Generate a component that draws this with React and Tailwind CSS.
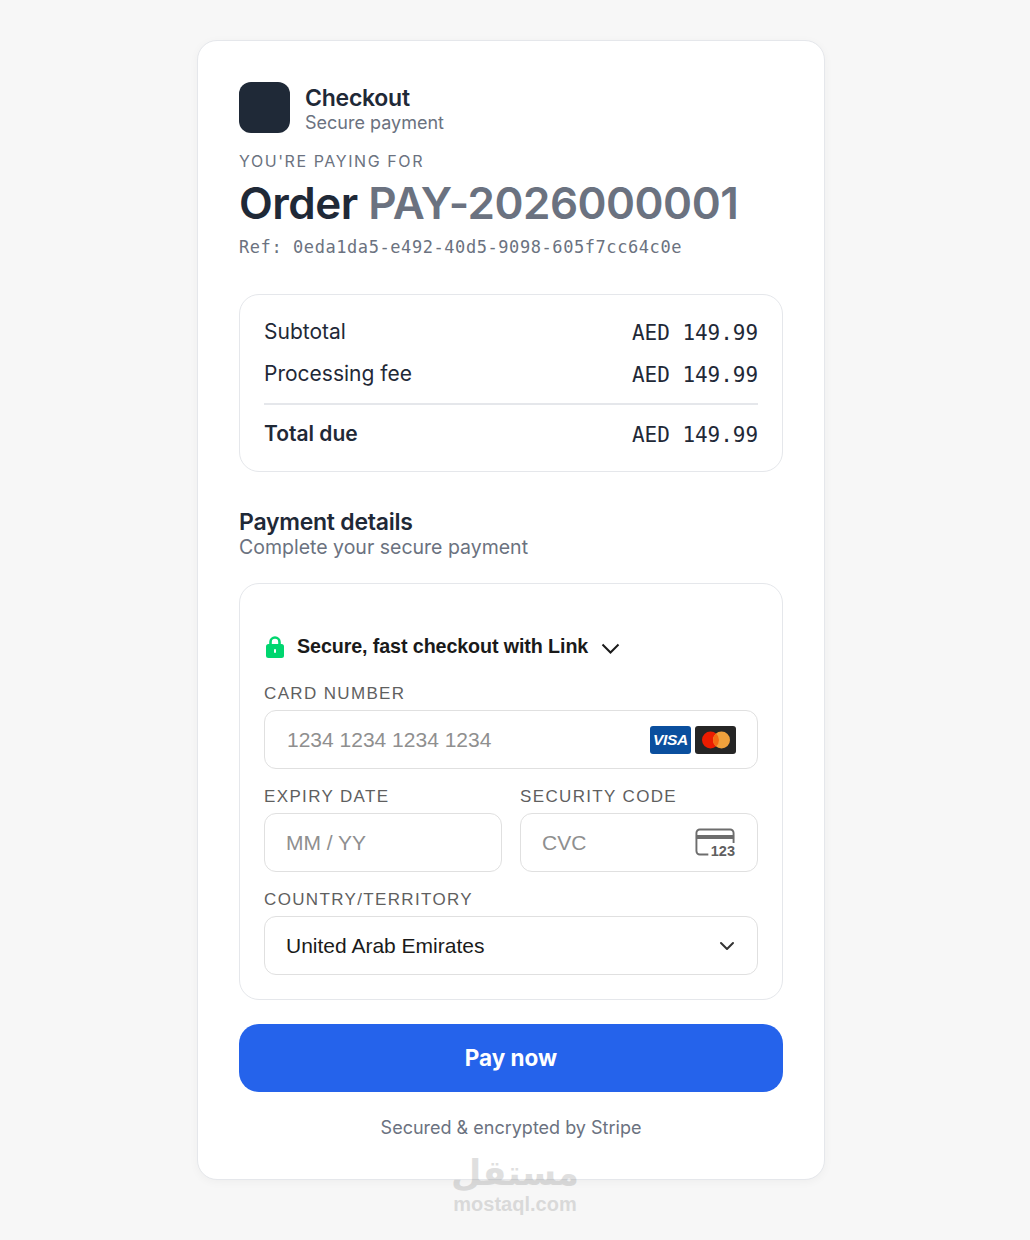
import { ChevronDown } from 'lucide-react';

const inter = "font-['Inter',sans-serif]";
const arial = "font-['Liberation_Sans',Arial,sans-serif]";
const mono = "font-['DejaVu_Sans_Mono',monospace]";

const SummaryRow = ({ label, bold, className }) => (
  <div className={`flex items-center justify-between h-[42px] ${className || ''}`}>
    <span className={`text-[21px] text-[#1f2937] ${bold ? 'font-semibold' : ''}`}>{label}</span>
    <span className={`${mono} mt-[4px] text-[21px] tracking-[-0.04px] text-[#1f2937]`}>AED 149.99</span>
  </div>
);

const FieldLabel = ({ children }) => (
  <div className="h-[17px] leading-[17px] mb-[8px] text-[17px] tracking-[1.35px] text-[#5f5f5f] uppercase whitespace-nowrap">{children}</div>
);

const Field = ({ children, className }) => (
  <div className={`h-[59px] border border-[#e0e0e0] rounded-[12px] flex items-center justify-between bg-white ${className || ''}`}>
    {children}
  </div>
);

const LockIcon = () => (
  <svg width="18" height="22" viewBox="0 0 18 22" className="ml-[2px]">
    <path d="M4.500 9V6a4.500 4.500 0 0 1 9 0v3" fill="none" stroke="#00d66f" strokeWidth="2.600" />
    <rect x="0" y="8" width="18" height="14" rx="2.500" fill="#00d66f" />
    <rect x="8" y="13" width="2" height="4" rx="1" fill="#fff" />
  </svg>
);

const LinkChevron = () => (
  <svg width="19" height="11" viewBox="0 0 19 11" className="ml-[13px] mt-[3px]">
    <path d="M1.500 1.500L9.500 9.500l8-8" fill="none" stroke="#1a1a1a" strokeWidth="2" />
  </svg>
);

const VisaBadge = () => (
  <div className="w-[41px] h-[28px] rounded-[3px] bg-[#0a4f9e] flex items-center justify-center">
    <span className="text-white text-[15.5px] font-bold italic leading-none tracking-[-0.3px]">VISA</span>
  </div>
);

const MastercardBadge = () => (
  <div className="w-[41px] h-[28px] rounded-[3px] bg-[#252525] flex items-center justify-center">
    <svg width="30" height="20" viewBox="0 0 30 20">
      <circle cx="9.500" cy="10" r="8.500" fill="#eb1c00" />
      <circle cx="20.500" cy="10" r="8.500" fill="#f0a13c" />
      <path d="M15 3.500a8.500 8.500 0 0 1 0 13a8.500 8.500 0 0 1 0-13z" fill="#f36a12" />
    </svg>
  </div>
);

const CvcIcon = () => (
  <div className="relative w-[40px] h-[30px]">
    <svg width="40" height="30" viewBox="0 0 42 30" preserveAspectRatio="none" className="absolute inset-0">
      <path d="M14 26.500H5a3.500 3.500 0 0 1-3.500-3.500V5A3.500 3.500 0 0 1 5 1.500h32A3.500 3.500 0 0 1 40.500 5v11" fill="none" stroke="#6d6d6d" strokeWidth="2" />
      <rect x="1" y="7" width="40" height="4" fill="#6d6d6d" />
    </svg>
    <span className="absolute right-[0px] bottom-[-1px] text-[14.5px] leading-[16px] font-bold text-[#5f5f5f] bg-white pl-[2px]">123</span>
  </div>
);

export default function App() {
  return (
    <div className={`relative h-[1240px] bg-[#f7f7f7] pt-[40px] ${inter}`}>
      <div className="w-[628px] h-[1140px] ml-[197px] bg-white border border-[#e5e7eb] rounded-[20px] shadow-[0_2px_10px_rgba(0,0,0,0.04)] px-[41px] pt-[41px]">
        <div className="flex items-center gap-[15px]">
          <div className="w-[51px] h-[51px] rounded-[12px] bg-[#1f2937]"></div>
          <div className="pt-[1px]">
            <div className="text-[23px] leading-[28px] font-semibold text-[#1f2937] tracking-[-0.25px]">Checkout</div>
            <div className="text-[18px] leading-[21px] text-[#6b7280]">Secure payment</div>
          </div>
        </div>

        <div className="mt-[19px] h-[18px] leading-[18px] text-[16px] tracking-[1.58px] text-[#6b7280] uppercase">You're paying for</div>
        <div className="mt-[7px] h-[52px] leading-[52px] text-[44px] font-semibold tracking-[-0.5px] text-[#1f2937] whitespace-nowrap">
          Order <span className="text-[#6b7280]">PAY-2026000001</span>
        </div>
        <div className={`${mono} mt-[7px] h-[22px] leading-[22px] text-[17px] tracking-[0.57px] text-[#6b7280] whitespace-nowrap`}>
          Ref: 0eda1da5-e492-40d5-9098-605f7cc64c0e
        </div>

        <div className="mt-[36px] h-[178px] border border-[#e5e7eb] rounded-[20px] px-[24px] pt-[16px]">
          <SummaryRow label="Subtotal" />
          <SummaryRow label="Processing fee" />
          <div className="mt-[8px] h-[2px] bg-[#e5e7eb]"></div>
          <SummaryRow label="Total due" bold className="mt-[8px]" />
        </div>

        <div className="mt-[37px] h-[26px] leading-[26px] text-[23px] font-semibold text-[#1f2937] tracking-[-0.25px]">Payment details</div>
        <div className="h-[24px] leading-[24px] text-[19.5px] text-[#6b7280]">Complete your secure payment</div>

        <div className={`mt-[24px] h-[417px] border border-[#e5e7eb] rounded-[20px] px-[24px] pt-[51px] ${arial}`}>
          <div className="flex items-center h-[24px] mb-[26px]">
            <LockIcon />
            <span className="ml-[13px] text-[19.7px] font-bold text-[#1a1a1a] tracking-[-0.1px] whitespace-nowrap">Secure, fast checkout with Link</span>
            <LinkChevron />
          </div>

          <FieldLabel>Card number</FieldLabel>
          <Field className="pl-[22px] pr-[21px]">
            <span className="text-[21px] text-[#8f8f8f]">1234 1234 1234 1234</span>
            <div className="flex gap-[4px]">
              <VisaBadge />
              <MastercardBadge />
            </div>
          </Field>

          <div className="grid grid-cols-2 gap-[18px] mt-[19px]">
            <div>
              <FieldLabel>Expiry date</FieldLabel>
              <Field className="pl-[21px]">
                <span className="text-[21px] text-[#8f8f8f]">MM / YY</span>
              </Field>
            </div>
            <div>
              <FieldLabel>Security code</FieldLabel>
              <Field className="pl-[21px] pr-[22px]">
                <span className="text-[21px] text-[#8f8f8f]">CVC</span>
                <CvcIcon />
              </Field>
            </div>
          </div>

          <div className="mt-[19px]">
            <FieldLabel>Country/Territory</FieldLabel>
            <Field className="pl-[21px] pr-[18px]">
              <span className="text-[21px] text-[#1a1a1a]">United Arab Emirates</span>
              <ChevronDown size={24} strokeWidth={2} className="text-[#333333]" />
            </Field>
          </div>
        </div>

        <div className="mt-[24px] h-[68px] rounded-[20px] bg-[#2563eb] flex items-center justify-center text-white text-[22.5px] font-bold">
          Pay now
        </div>
        <div className="mt-[24px] text-center text-[18px] leading-[24px] text-[#6b7280]">Secured &amp; encrypted by Stripe</div>
      </div>

      {/* watermark over the card edge */}
      <div className="absolute left-[415px] top-[1152px] w-[200px] text-center opacity-[0.18] text-[#555555] pointer-events-none">
        <div className="font-['DejaVu_Sans',sans-serif] text-[35px] font-bold leading-[42px]" dir="rtl">مستقل</div>
        <div className={`${arial} text-[20px] font-bold leading-[20px]`}>mostaql.com</div>
      </div>
    </div>
  );
}
